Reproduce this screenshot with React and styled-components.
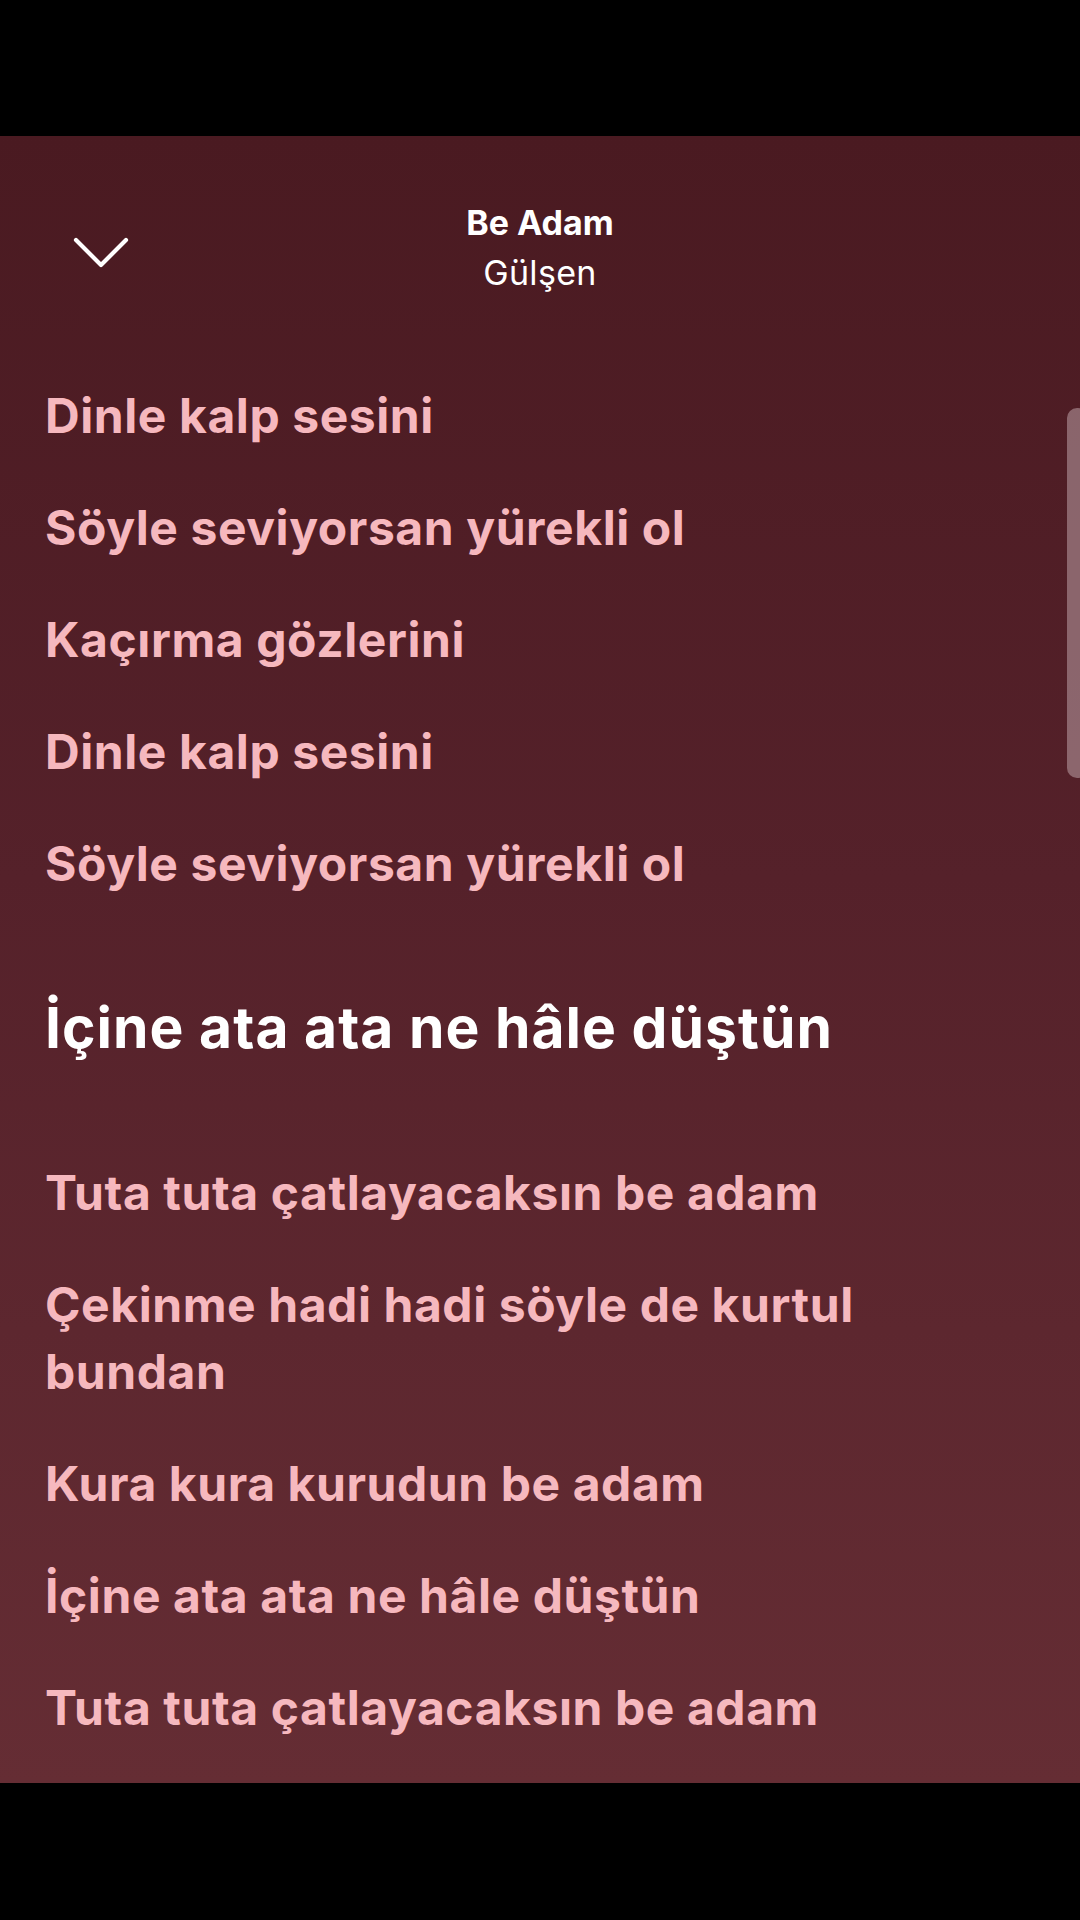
import React from "react";
import styled, { createGlobalStyle } from "styled-components";

const GlobalStyle = createGlobalStyle`
  html, body { margin: 0; padding: 0; background: #000; }
  body { font-family: Inter, "Noto Sans", "DejaVu Sans", sans-serif; }
  * { box-sizing: border-box; }
`;

const Screen = styled.div`
  width: 1080px;
  height: 1920px;
  display: flex;
  flex-direction: column;
  background: #000;
  overflow: hidden;
`;

const BlackBar = styled.div`
  height: ${(p) => p.$h}px;
  flex: none;
  background: #000;
`;

const Player = styled.div`
  position: relative;
  height: 1647px;
  flex: none;
  background: linear-gradient(180deg, #4a1a21 0%, #55212a 45%, #652d34 100%);
  display: flex;
  flex-direction: column;
  overflow: hidden;
`;

const Header = styled.header`
  display: grid;
  grid-template-columns: 1fr auto 1fr;
  align-items: center;
  padding: 62px 72px 0 72px;
`;

const BackButton = styled.button`
  justify-self: start;
  width: 58px;
  height: 34px;
  margin-top: 8px;
  padding: 0;
  border: 0;
  background: transparent;
  display: flex;
  align-items: center;
  justify-content: center;
`;

const TitleBlock = styled.div`
  display: flex;
  flex-direction: column;
  align-items: center;
  color: #fff;
`;

const SongTitle = styled.div`
  font-size: 34px;
  line-height: 50px;
  font-weight: 700;
  letter-spacing: 0;
`;

const Artist = styled.div`
  font-size: 34px;
  line-height: 50px;
  font-weight: 400;
  letter-spacing: 0.01em;
`;

const Lyrics = styled.div`
  display: flex;
  flex-direction: column;
  align-items: flex-start;
  gap: 45px;
  padding: 84px 90px 0 45px;
`;

const Line = styled.p`
  margin: ${(p) => (p.$active ? "46px 0" : "0")};
  font-size: ${(p) => (p.$active ? "57px" : "48px")};
  line-height: ${(p) => (p.$active ? "80px" : "67px")};
  font-weight: 700;
  letter-spacing: ${(p) => (p.$active ? "0.018em" : "0.012em")};
  color: ${(p) => (p.$active ? "#ffffff" : "#f6b8be")};
`;

const ScrollThumb = styled.div`
  position: absolute;
  right: -8px;
  top: 272px;
  width: 21px;
  height: 370px;
  border-radius: 10px;
  background: rgba(170, 140, 146, 0.65);
`;

const lines = [
  "Dinle kalp sesini",
  "Söyle seviyorsan yürekli ol",
  "Kaçırma gözlerini",
  "Dinle kalp sesini",
  "Söyle seviyorsan yürekli ol",
  { text: "İçine ata ata ne hâle düştün", active: true },
  "Tuta tuta çatlayacaksın be adam",
  "Çekinme hadi hadi söyle de kurtul bundan",
  "Kura kura kurudun be adam",
  "İçine ata ata ne hâle düştün",
  "Tuta tuta çatlayacaksın be adam",
];

export default function App() {
  return (
    <>
      <GlobalStyle />
      <Screen>
        <BlackBar $h={136} />
        <Player>
          <Header>
            <BackButton aria-label="Kapat">
              <svg width="58" height="34" viewBox="0 0 58 34" fill="none">
                <path
                  d="M4 5 L29 30 L54 5"
                  stroke="#fff"
                  strokeWidth="4.2"
                  strokeLinecap="round"
                  strokeLinejoin="round"
                />
              </svg>
            </BackButton>
            <TitleBlock>
              <SongTitle>Be Adam</SongTitle>
              <Artist>Gülşen</Artist>
            </TitleBlock>
            <div />
          </Header>
          <Lyrics>
            {lines.map((l, i) =>
              typeof l === "string" ? (
                <Line key={i}>{l}</Line>
              ) : (
                <Line key={i} $active>
                  {l.text}
                </Line>
              )
            )}
          </Lyrics>
          <ScrollThumb />
        </Player>
        <BlackBar $h={137} />
      </Screen>
    </>
  );
}
